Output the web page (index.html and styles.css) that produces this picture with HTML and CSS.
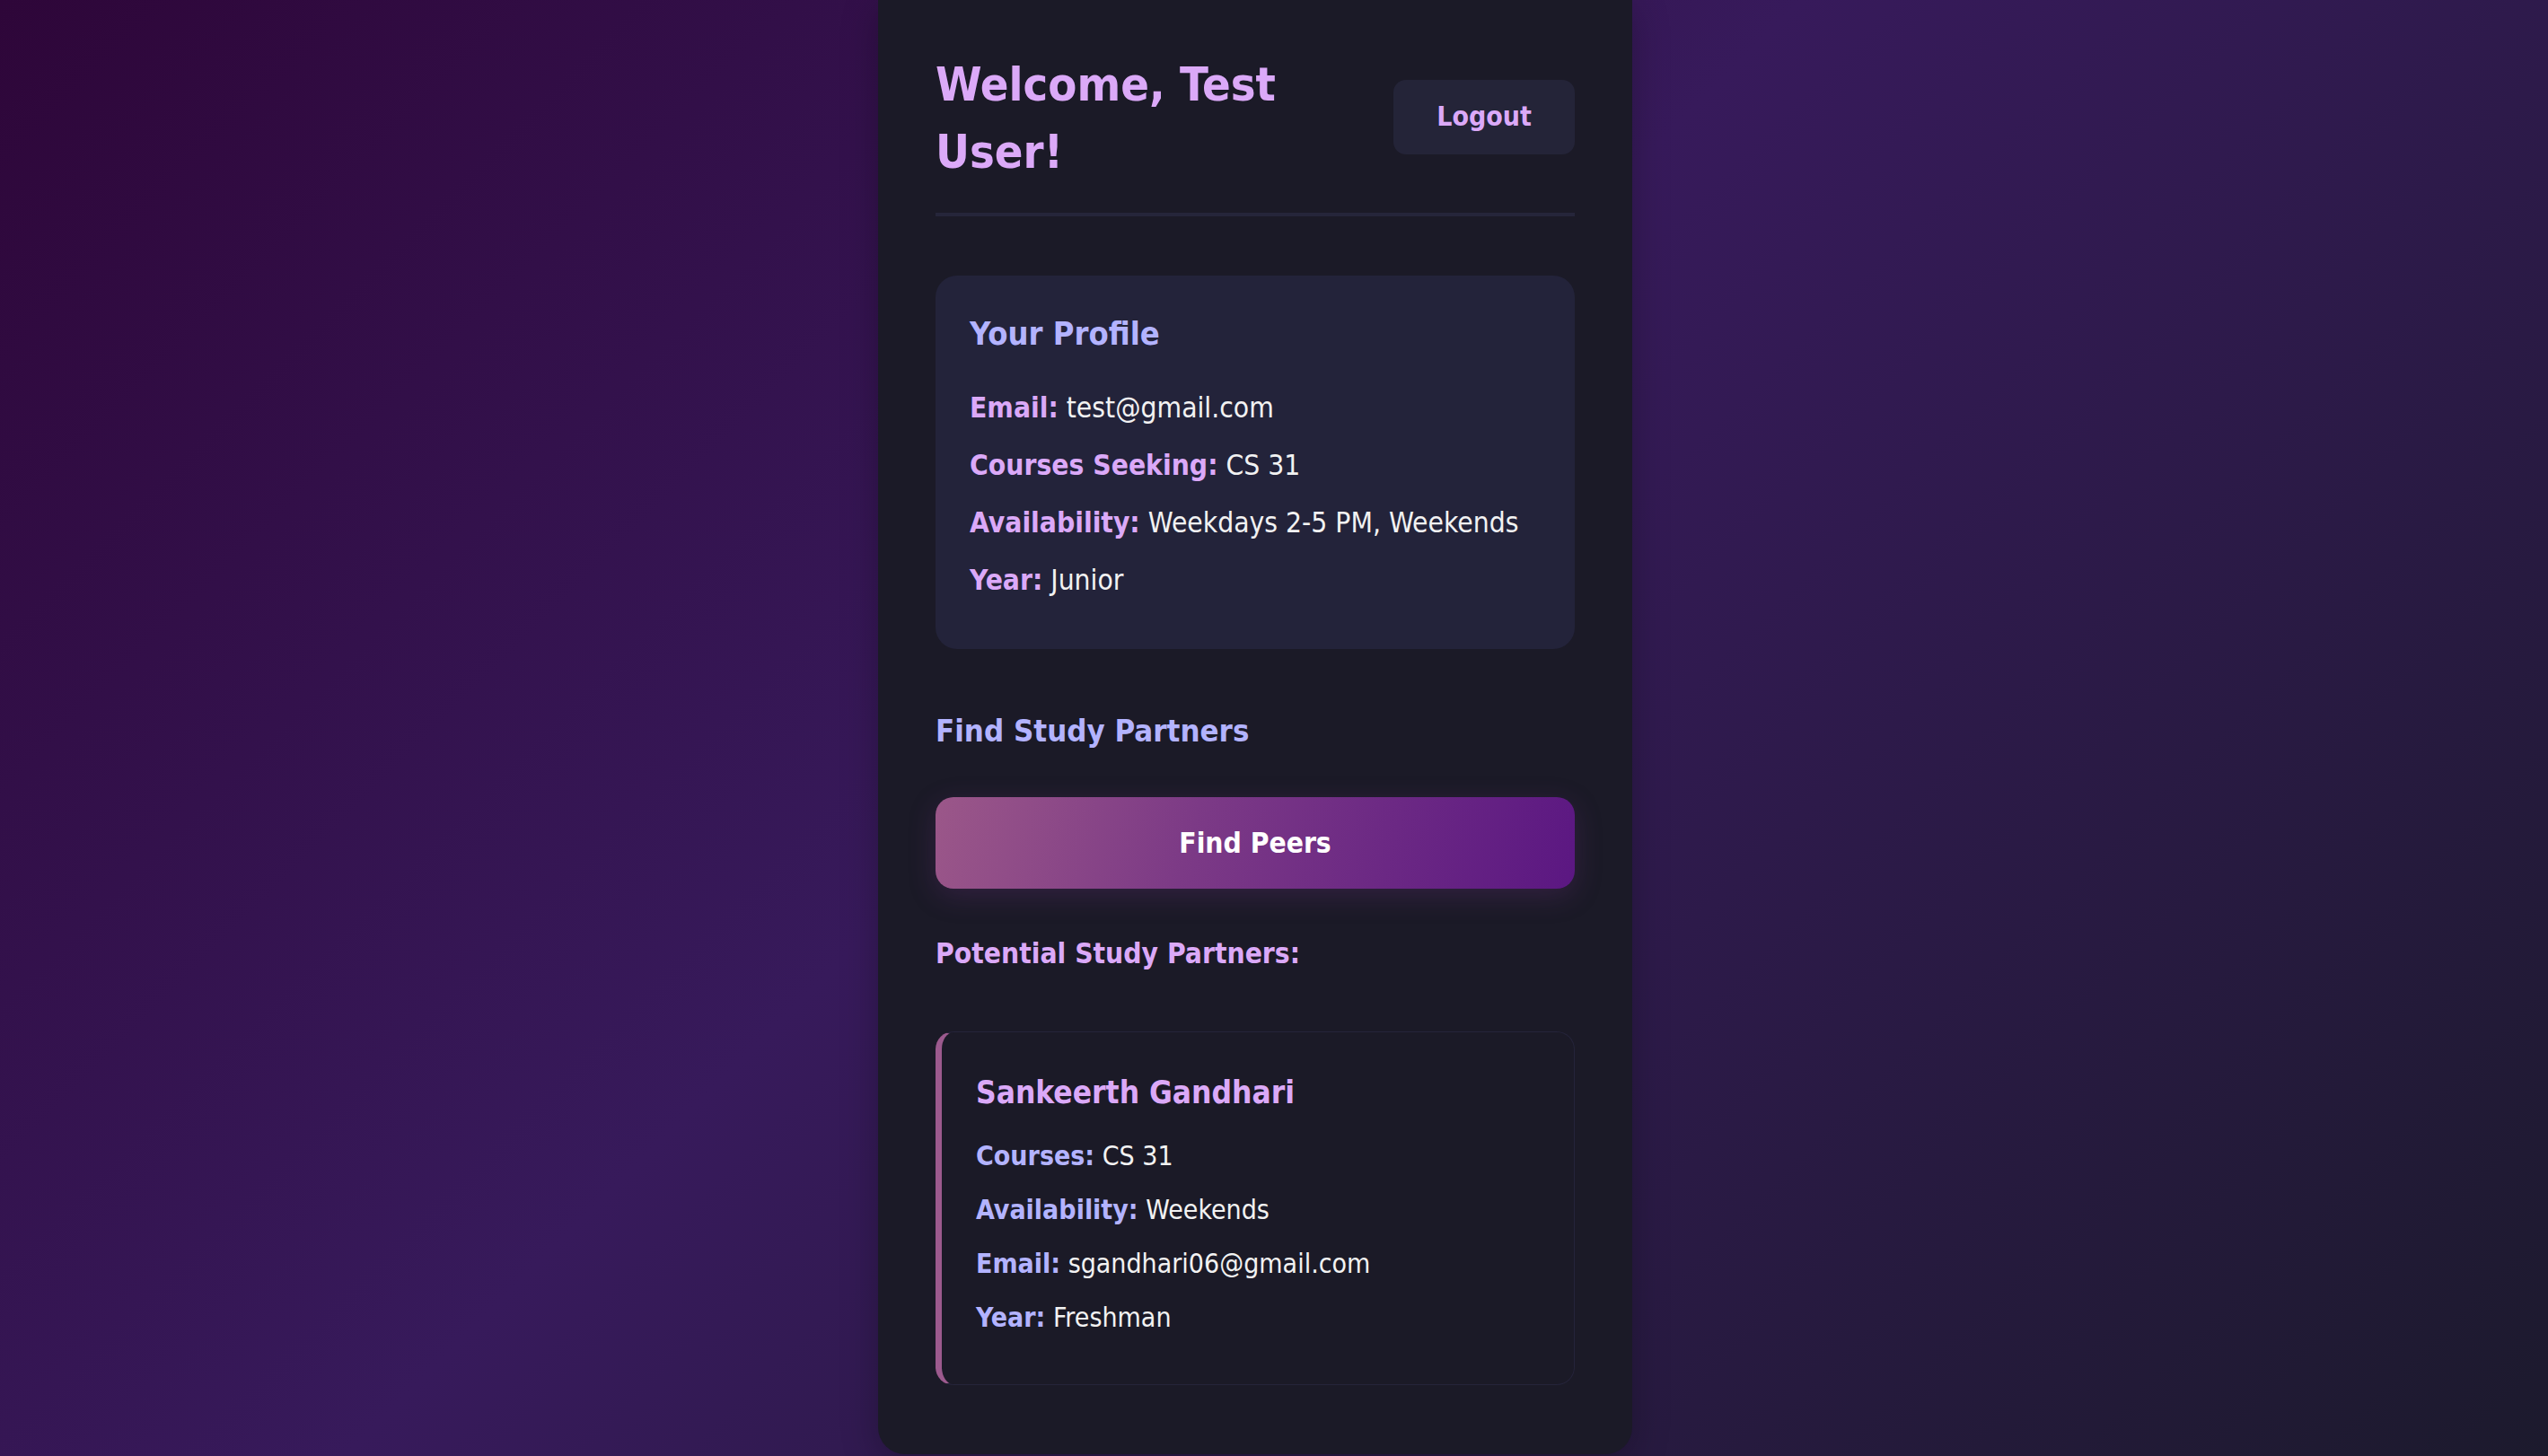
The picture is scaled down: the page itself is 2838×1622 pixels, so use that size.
FILE: index.html
```html
<!DOCTYPE html>
<html lang="en">
<head>
<meta charset="utf-8">
<title>Dashboard</title>
<link rel="stylesheet" href="styles.css">
</head>
<body>
  <main class="container">
    <header class="header">
      <h1 class="welcome">Welcome, Test User!</h1>
      <button class="logout">Logout</button>
    </header>

    <section class="profile-card">
      <h2 class="profile-title">Your Profile</h2>
      <p class="profile-line"><strong>Email:</strong> test@gmail.com</p>
      <p class="profile-line"><strong>Courses Seeking:</strong> CS 31</p>
      <p class="profile-line"><strong>Availability:</strong> Weekdays 2-5 PM, Weekends</p>
      <p class="profile-line"><strong>Year:</strong> Junior</p>
    </section>

    <h3 class="find-title">Find Study Partners</h3>
    <button class="find-btn">Find Peers</button>

    <h4 class="potential-title">Potential Study Partners:</h4>

    <article class="peer-card">
      <h5 class="peer-name">Sankeerth Gandhari</h5>
      <p class="peer-line"><strong>Courses:</strong> CS 31</p>
      <p class="peer-line"><strong>Availability:</strong> Weekends</p>
      <p class="peer-line"><strong>Email:</strong> sgandhari06@gmail.com</p>
      <p class="peer-line"><strong>Year:</strong> Freshman</p>
    </article>
  </main>
</body>
</html>
```

FILE: styles.css
```css
* {
  box-sizing: border-box;
}

html, body {
  margin: 0;
  height: 100%;
}

body {
  font-family: "DejaVu Sans Condensed", "DejaVu Sans", sans-serif;
  font-stretch: condensed;
  background: linear-gradient(135deg, #2e0639 0%, #371a5b 45%, #1c1a2d 100%);
  color: #f2f2f2;
  padding: 0 42px 2px 0;
  overflow: hidden;
}

.container {
  width: 840px;
  height: 1620px;
  margin: 0 auto;
  background: #1b1a27;
  border-radius: 0 0 30px 30px;
  padding: 57px 64px 78px 64px;
  box-shadow: 0 10px 40px rgba(0, 0, 0, 0.25);
}

.header {
  display: flex;
  align-items: center;
  justify-content: space-between;
  padding-bottom: 30px;
  border-bottom: 4px solid #25253a;
  margin-bottom: 66px;
}

.welcome {
  margin: 0;
  max-width: 470px;
  font-size: 52px;
  line-height: 75px;
  font-weight: bold;
  color: #dba9f8;
}

.logout {
  font-family: inherit;
  font-stretch: condensed;
  font-size: 30px;
  font-weight: bold;
  color: #dba9f8;
  background: #242438;
  border: none;
  border-radius: 14px;
  padding: 24px 48px;
  line-height: 1.164;
  margin-top: -3px;
}

.profile-card {
  background: #23233a;
  border-radius: 24px;
  padding: 43px 38px 37px 38px;
}

.profile-title {
  margin: 0 0 37px 0;
  font-size: 36px;
  line-height: 1.2;
  color: #b3b3ff;
}

.profile-line {
  margin: 0 0 16px 0;
  font-size: 31.5px;
  line-height: 48px;
}

.profile-line strong {
  color: #dba9f8;
}

.find-title {
  margin: 71px 0 52px 0;
  font-size: 34.5px;
  line-height: 1.2;
  color: #b3b3ff;
}

.find-btn {
  display: block;
  width: 100%;
  height: 102px;
  border: none;
  border-radius: 20px;
  font-family: inherit;
  font-stretch: condensed;
  font-size: 31.5px;
  font-weight: bold;
  color: #ffffff;
  background: linear-gradient(105deg, #9b5789 0%, #7c3a86 40%, #5b1782 100%);
  box-shadow: 0 8px 30px rgba(110, 50, 130, 0.28);
}

.potential-title {
  margin: 54px 0 68px 0;
  font-size: 31.5px;
  line-height: 1.2;
  color: #dba9f8;
}

.peer-card {
  background: #1b1a27;
  border: 1px solid #25243a;
  border-left: 7px solid #9c5a8e;
  border-radius: 20px;
  padding: 46px 38px 36px 38px;
}

.peer-name {
  margin: 0 0 28px 0;
  font-size: 35px;
  line-height: 1.2;
  color: #dba9f8;
}

.peer-line {
  margin: 0 0 16px 0;
  font-size: 30px;
  line-height: 44px;
}

.peer-line strong {
  color: #b3b3ff;
}
```
